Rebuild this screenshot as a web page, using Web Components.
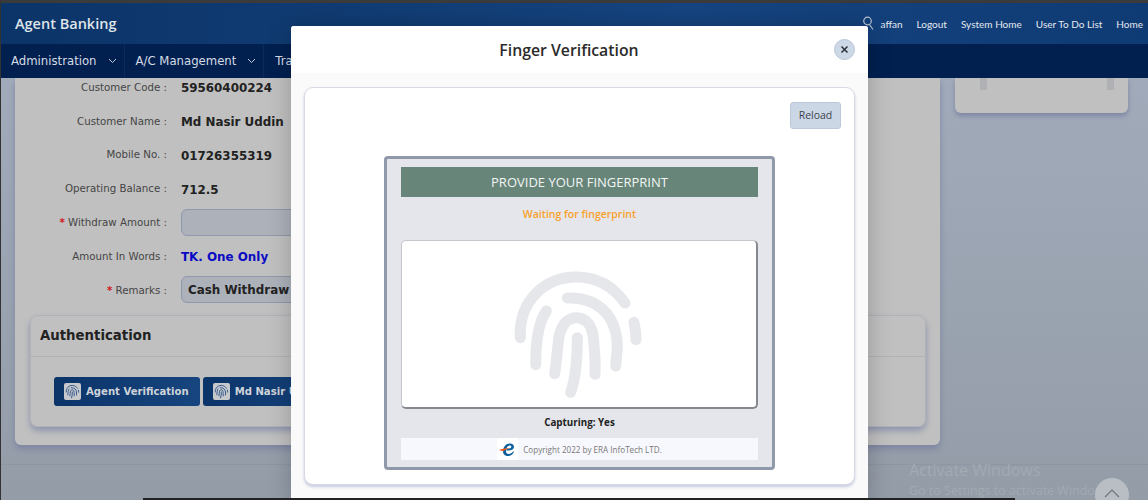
<!DOCTYPE html>
<html>
<head>
<meta charset="utf-8">
<title>Agent Banking</title>
<style>
  html, body { margin: 0; height: 500px; overflow: hidden; }
  body { background: #98a1ae; font-family: 'DejaVu Sans', sans-serif; }
</style>
</head>
<body>
<bank-app></bank-app>

<script>
/* global HTMLElement */
const PRINT = `
  <path d="M94 262C88 150 170 80 262 80c62 0 112 30 146 78"/>
  <path d="M235 143c88-4 150 50 150 150l-5 54"/>
  <path d="M172 182c-24 34-32 90-32 161"/>
  <path d="M197 370c6-40 8-76 13-110 10-50 38-58 52-58 34 0 50 30 52 70 3 34 6 66 4 100"/>
  <path d="M265 262c0 58-4 118-20 164"/>
  <path d="M435 216c4 18 6 34 6 52"/>`

class Base extends HTMLElement {
  constructor () {
    super()
    this.attachShadow({ mode: 'open' })
  }

  connectedCallback () {
    this.shadowRoot.innerHTML = this.markup()
  }
}

class AppHeader extends Base {
  markup () {
    return `
      <style>
        :host { display: block; }
        .top {
          height: 41px;
          display: flex;
          align-items: center;
          justify-content: space-between;
          padding: 0 5px 0 15px;
          background: linear-gradient(90deg, #0b3468, #164480 60%, #0f3b74);
          color: #e4e9f0;
          font-family: 'Open Sans', sans-serif;
        }
        .brand { font-size: 14.5px; font-weight: 600; color: #dfe4ea; }
        .links { display: flex; align-items: center; gap: 14px; font-size: 10px; font-family: Lato, sans-serif; }
        .links svg { margin-right: -7px; }
        nav {
          height: 34px;
          display: flex;
          background: #012050;
          color: #d5dbe4;
          font-size: 11.7px;
        }
        .item {
          display: flex;
          align-items: center;
          gap: 11px;
          padding: 0 7px 0 11px;
          border-right: 1px solid #0a2b5e;
          white-space: nowrap;
        }
      </style>
      <div class="top">
        <span class="brand">Agent Banking</span>
        <div class="links">
          <svg width="12" height="15" viewBox="0 0 12 15" fill="none" stroke="#b9c4d4" stroke-width="1.2"><circle cx="5.5" cy="5" r="3.8"/><path d="M7.5 8.5l3.5 5"/></svg>
          <span>affan</span><span>Logout</span><span>System Home</span><span>User To Do List</span><span>Home</span>
        </div>
      </div>
      <nav>
        <div class="item">Administration ${this.chev()}</div>
        <div class="item">A/C Management ${this.chev()}</div>
        <div class="item">Transaction</div>
      </nav>`
  }

  chev () {
    return '<svg width="9" height="6" viewBox="0 0 9 6" fill="none" stroke="#c5cdd9" stroke-width="1"><path d="M1 1l3.5 3.5L8 1"/></svg>'
  }
}

class FormRow extends Base {
  markup () {
    const req = this.hasAttribute('required') ? '<b>*</b> ' : ''
    return `
      <style>
        :host {
          display: grid;
          grid-template-columns: 152px 1fr;
          column-gap: 14px;
          align-items: center;
          height: 33.8px;
        }
        label { text-align: right; font-size: 10.25px; color: #454545; white-space: nowrap; }
        b { color: #d0181f; font-weight: 700; }
      </style>
      <label>${req}${this.getAttribute('label')} :</label>
      <div><slot></slot></div>`
  }
}

class FieldValue extends Base {
  markup () {
    const input = this.hasAttribute('input')
    return `
      <style>
        :host { display: block; }
        .v { font-size: 11.9px; font-weight: 700; color: ${this.getAttribute('color') || '#222'}; white-space: nowrap; }
        .box {
          box-sizing: border-box;
          height: 27px;
          width: 300px;
          display: flex;
          align-items: center;
          padding: 0 6px;
          background: #adb1ba;
          border: 1px solid #8f99ab;
          border-radius: 6px;
        }
      </style>
      ${input ? '<div class="box v"><slot></slot></div>' : '<span class="v"><slot></slot></span>'}`
  }
}

class FpButton extends Base {
  markup () {
    return `
      <style>
        :host {
          display: inline-flex;
          align-items: center;
          gap: 5px;
          box-sizing: border-box;
          height: 29px;
          padding: 0 11px 0 10px;
          border-radius: 3px;
          background: linear-gradient(90deg, #0b3469, #17457f);
          color: #cfd3da;
          font-size: 10.1px;
          font-weight: 700;
          white-space: nowrap;
        }
        .ic { width: 17px; height: 17px; border-radius: 2px; background: #c6c8cc; display: flex; align-items: center; justify-content: center; }
      </style>
      <span class="ic"><svg width="15" height="15" viewBox="60 50 420 400" fill="none" stroke="#2a5288" stroke-width="26" stroke-linecap="round">${PRINT}</svg></span>
      <slot></slot>`
  }
}

class AuthCard extends Base {
  markup () {
    return `
      <style>
        :host {
          display: block;
          margin: 8px 14px 0 15px;
          height: 112px;
          box-sizing: border-box;
          border: 1px solid #b0b2b8;
          border-radius: 8px;
          box-shadow: 0 4px 6px #8f95ad;
          overflow: hidden;
        }
        h3 {
          margin: 0;
          height: 41px;
          line-height: 39px;
          box-sizing: border-box;
          padding-left: 9px;
          font-size: 13.3px;
          color: #222;
          border-bottom: 1px solid #b3b3b3;
        }
        .btns { display: flex; gap: 3px; padding: 20px 0 0 23px; }
      </style>
      <h3>Authentication</h3>
      <div class="btns"><slot></slot></div>`
  }
}

class FingerScanner extends Base {
  markup () {
    return `
      <style>
        :host {
          display: block;
          box-sizing: border-box;
          width: 391px;
          height: 314px;
          margin: 0 auto;
          padding: 8px 14px;
          background: #e4e6eb;
          border: 3px solid #9099a9;
          border-radius: 4px;
          font-family: 'Open Sans', sans-serif;
        }
        .bar { height: 30px; line-height: 30px; text-align: center; background: #678579; color: #f2f5f4; font-size: 13px; }
        .wait { height: 43px; line-height: 35px; text-align: center; color: #f9a02c; font-size: 10.5px; font-weight: 600; }
        .pad {
          box-sizing: border-box;
          height: 169px;
          display: flex;
          justify-content: center;
          padding-top: 26px;
          background: #fff;
          border: 1px solid #c4c6cc;
          border-right: 2px solid #85898f;
          border-bottom: 2px solid #85898f;
          border-radius: 5px;
        }
        .cap { height: 29px; line-height: 28px; text-align: center; font-size: 9.8px; font-weight: 700; color: #222; }
        .foot {
          height: 22px;
          display: flex;
          align-items: center;
          justify-content: center;
          gap: 5px;
          background: #f7f8fd;
          color: #777;
          font-size: 8.1px;
        }
        .logo { width: 21px; height: 22px; background: #fff; display: flex; align-items: center; justify-content: center; }
      </style>
      <div class="bar">PROVIDE YOUR FINGERPRINT</div>
      <div class="wait">Waiting for fingerprint</div>
      <div class="pad">
        <svg width="140" height="133.3" viewBox="60 50 420 400" fill="none" stroke="#e5e7eb" stroke-width="33" stroke-linecap="round">${PRINT}</svg>
      </div>
      <div class="cap">Capturing: Yes</div>
      <div class="foot">
        <span class="logo"><svg width="17" height="15" viewBox="0 0 17 15">
          <path d="M15 9.5c-1 3-3.500 4.500-6 4.500-3 0-5-2-5-4.800C4 5 7 1.500 11 1.500c2.500 0 4 1.500 4 3.500 0 2.500-3 3.500-7.500 3.500l.2-1.800C11 6.700 12.300 6 12.300 4.800c0-.8-.6-1.300-1.500-1.300C8.500 3.500 7 6.500 7 9c0 1.800 1 3 2.700 3 1.800 0 3.300-1 4.300-2.500z" fill="#0d5f9e"/>
          <path d="M0 8c3-1.500 7-2 12-1.800-4 .6-6 1.500-7.500 3C3 9 1.500 8.600 0 8z" fill="#ee5a1c"/>
        </svg></span>
        <span>Copyright 2022 by ERA InfoTech LTD.</span>
      </div>`
  }
}

class VerifyModal extends Base {
  markup () {
    return `
      <style>
        :host {
          position: absolute;
          left: 291px;
          top: 26px;
          width: 577px;
          height: 480px;
          background: #fafafa;
          box-shadow: 0 0 24px rgba(0, 0, 0, .22);
          border-radius: 3px 3px 0 0;
          font-family: 'Open Sans', sans-serif;
        }
        header {
          height: 47px;
          box-sizing: border-box;
          padding-right: 21px;
          display: flex;
          align-items: center;
          justify-content: center;
          position: relative;
          background: #fff;
          border-radius: 3px 3px 0 0;
        }
        h2 { margin: 0; font-size: 15.8px; font-weight: 600; color: #2b2b2b; }
        .close {
          position: absolute;
          right: 13px;
          top: 13px;
          width: 21px;
          height: 21px;
          box-sizing: border-box;
          border-radius: 50%;
          background: #cdd8e6;
          border: 1px solid #b9c5d8;
          display: flex;
          align-items: center;
          justify-content: center;
        }
        .wrap { padding: 14px 13px 0 13px; }
        .card {
          box-sizing: border-box;
          height: 398px;
          background: #fff;
          border: 1px solid #d9d9e3;
          border-radius: 9px;
          box-shadow: 0 2px 3px #c5cce3;
          padding: 14px 14px 0 14px;
        }
        .tools { display: flex; justify-content: flex-end; height: 54px; margin-right: -1px; }
        .reload {
          box-sizing: border-box;
          width: 51px;
          height: 27px;
          line-height: 25px;
          text-align: center;
          font-size: 10.5px;
          color: #3d4450;
          background: #ccd7e6;
          border: 1px solid #bcc8da;
          border-radius: 3px;
        }
      </style>
      <header>
        <h2>Finger Verification</h2>
        <span class="close"><svg width="9" height="9" viewBox="0 0 9 9" stroke="#2a2f38" stroke-width="1.5"><path d="M1.500 1.500l6 6M7.500 1.500l-6 6"/></svg></span>
      </header>
      <div class="wrap">
        <div class="card">
          <div class="tools"><span class="reload">Reload</span></div>
          <finger-scanner></finger-scanner>
        </div>
      </div>`
  }
}

class BankApp extends Base {
  markup () {
    return `
      <style>
        :host {
          display: flex;
          flex-direction: column;
          height: 500px;
          box-sizing: border-box;
          position: relative;
          overflow: hidden;
          background: linear-gradient(180deg, #a2abbb 60px, #9aa3b0 300px, #949ca8);
        }
        .strip { height: 3px; background: #3b3b3b; flex: none; }
        app-header { flex: none; }
        main {
          flex: none;
          height: 386px;
          display: flex;
          gap: 15px;
          padding: 0 20px 0 15px;
          overflow: hidden;
        }
        .panel {
          width: 925px;
          height: 367px;
          flex: none;
          background: #c0c0c0;
          border-radius: 0 0 6px 6px;
          box-shadow: 0 4px 6px #7e86a2;
        }
        .form { margin-top: -8px; }
        .side {
          width: 173px;
          height: 35px;
          background: #c0c0c0;
          border-radius: 0 0 6px 6px;
          box-shadow: 0 3px 5px #7e86a2;
          display: flex;
          justify-content: space-between;
          padding: 0 14px 0 25px;
          box-sizing: border-box;
        }
        .side i { display: block; width: 7px; height: 12px; background: #b0b1b4; }
        .line { border-top: 1px solid #8c97a1; }
        .edge { position: absolute; left: 0; top: 0; width: 1px; height: 500px; background: #333; }
        .win {
          position: absolute;
          left: 909px;
          top: 460px;
          color: #a2aab2;
          font-family: 'Open Sans', sans-serif;
          font-size: 12.500px;
          white-space: nowrap;
          line-height: 19px;
        }
        .win div:first-child { font-size: 16px; line-height: 21px; }
        .up {
          position: absolute;
          left: 1095px;
          top: 478px;
          width: 34px;
          height: 34px;
          border-radius: 50%;
          background: #b9bdc4;
          display: flex;
          justify-content: center;
        }
        .up svg { margin-top: 11px; }
        .taskbar { position: absolute; left: 143px; top: 498px; width: 872px; height: 2px; background: #222; }
      </style>
      <div class="strip"></div>
      <app-header></app-header>
      <main>
        <div class="panel">
          <div class="form">
            <form-row label="Customer Code"><field-value>59560400224</field-value></form-row>
            <form-row label="Customer Name"><field-value>Md Nasir Uddin</field-value></form-row>
            <form-row label="Mobile No."><field-value>01726355319</field-value></form-row>
            <form-row label="Operating Balance"><field-value>712.5</field-value></form-row>
            <form-row label="Withdraw Amount" required><field-value input></field-value></form-row>
            <form-row label="Amount In Words"><field-value color="#0a0ac4">TK. One Only</field-value></form-row>
            <form-row label="Remarks" required><field-value input>Cash Withdraw</field-value></form-row>
          </div>
          <auth-card>
            <fp-button>Agent Verification</fp-button>
            <fp-button>Md Nasir Uddin</fp-button>
          </auth-card>
        </div>
        <div class="side"><i></i><i></i></div>
      </main>
      <div class="line"></div>
      <div class="edge"></div>
      <div class="win"><div>Activate Windows</div><div>Go to Settings to activate Windows.</div></div>
      <div class="up"><svg width="16" height="9" viewBox="0 0 16 9" fill="none" stroke="#6e747d" stroke-width="1.200"><path d="M1 8l7-7 7 7"/></svg></div>
      <verify-modal></verify-modal>
      <div class="taskbar"></div>`
  }
}

customElements.define('app-header', AppHeader)
customElements.define('form-row', FormRow)
customElements.define('field-value', FieldValue)
customElements.define('fp-button', FpButton)
customElements.define('auth-card', AuthCard)
customElements.define('finger-scanner', FingerScanner)
customElements.define('verify-modal', VerifyModal)
customElements.define('bank-app', BankApp)
</script>
</body>
</html>
